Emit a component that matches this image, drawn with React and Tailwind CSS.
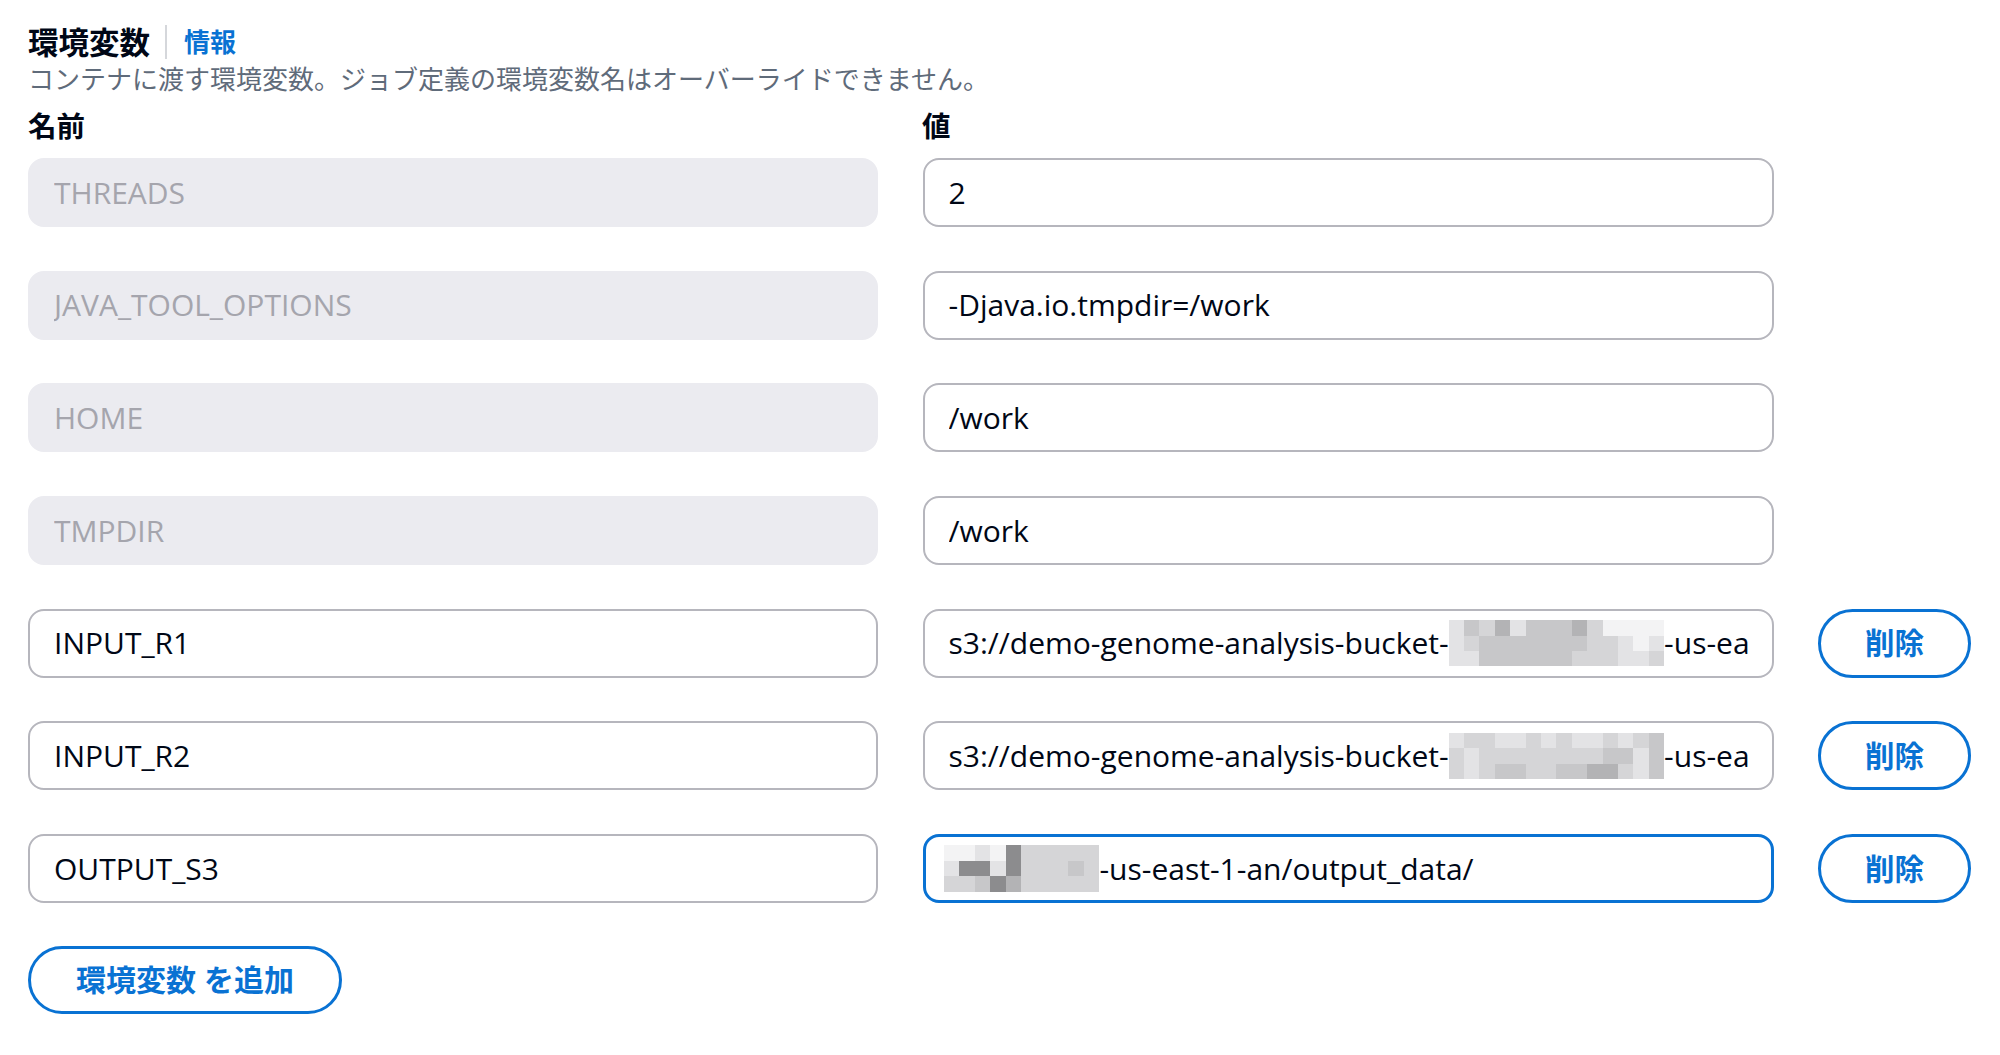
import clsx from "clsx";

// grayscale cells used for the masked parts of bucket names
const shade = {
  a: "bg-[#f3f3f4]",
  b: "bg-[#e3e3e5]",
  c: "bg-[#d5d5d7]",
  d: "bg-[#c7c7c9]",
  e: "bg-[#b3b3b5]",
  f: "bg-[#8c8c8e]",
  g: "bg-[#6e6e70]",
};

const masks = {
  r1: ["bdcebdddecaaaa", "bcdddddddccbab", "bbddddddcccbbc"],
  r2: ["bccbbcbcbbcbcd", "cbccccccccddbd", "cbcddccddeecbd"],
  s3: ["aabafccccc", "bffbfcccdc", "ccdfeccccc"],
};

function Mosaic({ rows, cell }) {
  return (
    <span className="inline-flex flex-col shrink-0">
      {rows.map((row, i) => (
        <span key={i} className="flex">
          {row.split("").map((k, j) => (
            <span
              key={j}
              className={clsx("block", shade[k])}
              style={{ width: cell, height: cell }}
            />
          ))}
        </span>
      ))}
    </span>
  );
}

function Field({ children, disabled, focused }) {
  return (
    <div
      className={clsx(
        "h-[69px] rounded-[16px] flex items-center",
        disabled && "px-[24px] bg-[#ebebf0] border-2 border-[#ebebf0] text-[#a5a5ad]",
        !disabled && !focused && "px-[24px] bg-white border-2 border-[#b6b6bd] text-[#000716]",
        focused && "pl-[18px] pr-[24px] bg-white border-[3px] border-[#0972d3] text-[#000716]"
      )}
    >
      <div className="w-full overflow-hidden whitespace-nowrap flex items-center text-[30px] leading-[48px]">
        {children}
      </div>
    </div>
  );
}

function RemoveButton() {
  return (
    <button className="h-[69px] w-[153px] rounded-full border-[3px] border-[#0972d3] text-[#0972d3] text-[29.5px] leading-[40px] font-bold flex items-center justify-center">
      削除
    </button>
  );
}

const rows = [
  { name: "THREADS", value: "2", locked: true },
  { name: "JAVA_TOOL_OPTIONS", value: "-Djava.io.tmpdir=/work", locked: true },
  { name: "HOME", value: "/work", locked: true },
  { name: "TMPDIR", value: "/work", locked: true },
  {
    name: "INPUT_R1",
    value: (
      <>
        <span>s3://demo-genome-analysis-bucket-</span>
        <Mosaic rows={masks.r1} cell={15.4} />
        <span>-us-east</span>
      </>
    ),
  },
  {
    name: "INPUT_R2",
    value: (
      <>
        <span>s3://demo-genome-analysis-bucket-</span>
        <Mosaic rows={masks.r2} cell={15.4} />
        <span>-us-east</span>
      </>
    ),
  },
  {
    name: "OUTPUT_S3",
    focused: true,
    value: (
      <>
        <Mosaic rows={masks.s3} cell={15.6} />
        <span>-us-east-1-an/output_data/</span>
      </>
    ),
  },
];

export default function App() {
  return (
    <div className="w-full h-[1055px] bg-white pt-[24px] px-[28px] font-['Open_Sans','Noto_Sans_CJK_JP',sans-serif] text-[#000716]">
      <div className="flex items-center h-[36px]">
        <h2 className="text-[30.5px] font-bold leading-[36px]">環境変数</h2>
        <span className="w-[2px] h-[34px] bg-[#d5d7db] ml-[15px] mr-[17px]" />
        <a href="#" className="text-[26px] font-bold text-[#0972d3] leading-[36px]">
          情報
        </a>
      </div>

      <p className="mt-[2px] h-[34px] leading-[34px] text-[26px] text-[#5f6b7a] whitespace-nowrap">
        コンテナに渡す環境変数。ジョブ定義の環境変数名はオーバーライドできません。
      </p>

      <div className="mt-[10px] grid grid-cols-[850px_851px_153px] gap-x-[44px] h-[40px] items-center">
        <span className="text-[28.5px] font-bold leading-[40px]">名前</span>
        <span className="text-[28.5px] font-bold leading-[40px]">値</span>
      </div>

      <div className="mt-[12px] flex flex-col gap-[43.7px]">
        {rows.map((r) => (
          <div key={r.name} className="grid grid-cols-[850px_851px_153px] gap-x-[44.5px]">
            <Field disabled={r.locked}>{r.name}</Field>
            <Field focused={r.focused}>{r.value}</Field>
            {!r.locked && <RemoveButton />}
          </div>
        ))}
      </div>

      <button className="mt-[43px] h-[68px] w-[314px] rounded-full border-[3px] border-[#0972d3] text-[#0972d3] text-[30px] leading-[40px] font-bold flex items-center justify-center">
        環境変数 を追加
      </button>
    </div>
  );
}
